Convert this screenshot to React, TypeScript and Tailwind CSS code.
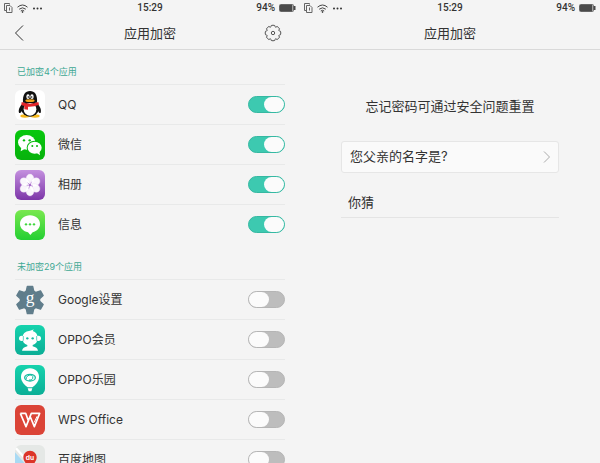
import React, { useState } from 'react';

type AppItem = {
  id: string;
  name: string;
  locked: boolean;
  icon: React.ReactNode;
};

const QQIcon = () => (
  <svg viewBox="0 0 90 90" className="w-full h-full" aria-hidden="true">
    <rect width="90" height="90" rx="18" fill="#fff" />
    <ellipse cx="30" cy="78" rx="14" ry="5" fill="#f5b81c" />
    <ellipse cx="60" cy="78" rx="14" ry="5" fill="#f5b81c" />
    <path d="M22 42C15 48 9 60 12 68c2 3 6-1 9-6M67 42c8 6 13 18 10 26-2 3-6-1-8-6" fill="#111" />
    <ellipse cx="45" cy="56" rx="26" ry="24" fill="#111" />
    <ellipse cx="45" cy="58" rx="19" ry="19" fill="#fff" />
    <path d="M24 38C22 14 31 3 45 3s23 11 21 35z" fill="#111" />
    <ellipse cx="39" cy="20" rx="5" ry="7" fill="#fff" />
    <ellipse cx="51" cy="20" rx="5" ry="7" fill="#fff" />
    <circle cx="40" cy="21" r="2.3" fill="#111" />
    <circle cx="50" cy="21" r="2.3" fill="#111" />
    <ellipse cx="45" cy="32" rx="14" ry="4" fill="#f5a81c" />
    <path d="M20 36q25 11 50 0l2 8q-15 7-33 6v9l-11-1v-10l-9-3z" fill="#e3262b" />
  </svg>
);

const WeChatIcon = () => (
  <svg viewBox="0 0 90 90" className="w-full h-full" aria-hidden="true">
    <defs>
      <linearGradient id="wechat" x2="0" y2="1">
        <stop stopColor="#08c80e" />
        <stop offset="1" stopColor="#08b20d" />
      </linearGradient>
    </defs>
    <rect width="90" height="90" rx="18" fill="url(#wechat)" />
    <path d="M19 52l-2 12 12-7z" fill="#fff" />
    <ellipse cx="35" cy="37" rx="26" ry="22" fill="#fff" />
    <circle cx="27" cy="31" r="3.5" fill="#08bd0e" />
    <circle cx="44" cy="31" r="3.5" fill="#08bd0e" />
    <ellipse cx="59" cy="53" rx="24" ry="21" fill="#08bb0e" />
    <ellipse cx="59" cy="53" rx="21" ry="18" fill="#fff" />
    <path d="M64 68l11 8-2-13z" fill="#fff" />
    <circle cx="52" cy="48" r="3" fill="#08b70d" />
    <circle cx="66" cy="48" r="3" fill="#08b70d" />
  </svg>
);

const GalleryIcon = () => (
  <svg viewBox="0 0 90 90" className="w-full h-full" aria-hidden="true">
    <defs>
      <linearGradient id="gallery" x2="0" y2="1">
        <stop stopColor="#c490df" />
        <stop offset="1" stopColor="#7c35a8" />
      </linearGradient>
    </defs>
    <rect width="90" height="90" rx="18" fill="url(#gallery)" />
    {[0, 60, 120, 180, 240, 300].map((angle) => (
      <ellipse key={angle} cx="45" cy="27" rx="12" ry="15" fill="#fff" fillOpacity="0.94" stroke="#e6d3f1" transform={`rotate(${angle} 45 45)`} />
    ))}
    <path d="M45 45l-7-7M45 45l5-10M45 45l-10 1M45 45l9 4M45 45l-4 11" stroke="#b47cd3" strokeWidth="2" />
    <circle cx="45" cy="45" r="2" fill="#9850bd" />
  </svg>
);

const MessageIcon = () => (
  <svg viewBox="0 0 90 90" className="w-full h-full" aria-hidden="true">
    <defs>
      <linearGradient id="message" x2="0" y2="1">
        <stop stopColor="#79e84f" />
        <stop offset="1" stopColor="#24cf32" />
      </linearGradient>
    </defs>
    <rect width="90" height="90" rx="18" fill="url(#message)" />
    <path d="M45 16c17 0 30 11 30 26 0 12-9 21-22 25l-7 8-7-8C25 64 15 54 15 42c0-15 13-26 30-26z" fill="#fff" />
    <circle cx="33" cy="43" r="3.5" fill="#3fd73c" />
    <circle cx="45" cy="43" r="3.5" fill="#3fd73c" />
    <circle cx="57" cy="43" r="3.5" fill="#3fd73c" />
  </svg>
);

const GoogleIcon = () => (
  <svg viewBox="0 0 90 90" className="w-full h-full" aria-hidden="true">
    <g fill="#607d8b" stroke="#607d8b" strokeWidth="4" strokeLinejoin="round">
      <circle cx="45" cy="45" r="29" />
      {[0, 60, 120, 180, 240, 300].map((angle) => (
        <path key={angle} d="M37 4h16l3 14H34z" transform={`rotate(${angle} 45 45)`} />
      ))}
    </g>
    <text x="45" y="55" textAnchor="middle" fontSize="52" fill="#fff" fontFamily="Liberation Serif, serif">g</text>
  </svg>
);

const MemberIcon = () => (
  <svg viewBox="0 0 90 90" className="w-full h-full" aria-hidden="true">
    <defs>
      <linearGradient id="member" x2="0" y2="1">
        <stop stopColor="#16d3ad" />
        <stop offset="1" stopColor="#0bae96" />
      </linearGradient>
    </defs>
    <rect width="90" height="90" rx="18" fill="url(#member)" />
    <g fill="#fff">
      <circle cx="20" cy="40" r="8" />
      <circle cx="70" cy="40" r="8" />
      <path d="M45 17q8-1 11-4-1 4-3 5 15 5 15 21 0 16-15 21v4q14 3 16 13H21q2-10 16-13v-4Q22 55 22 39q0-19 23-22z" />
    </g>
    <path d="M25 33v14M65 33v14" stroke="#16bca3" strokeWidth="2" />
    <circle cx="37" cy="40" r="3.5" fill="#16bca3" />
    <circle cx="53" cy="40" r="3.5" fill="#16bca3" />
  </svg>
);

const ParkIcon = () => (
  <svg viewBox="0 0 90 90" className="w-full h-full" aria-hidden="true">
    <rect width="90" height="90" rx="18" fill="url(#member)" />
    <path d="M45 10c16 0 27 11 27 26 0 12-9 23-20 31H38C27 59 18 48 18 36c0-15 11-26 27-26z" fill="#fff" />
    <path d="M38 70h14l-3 9h-8z" fill="#fff" />
    <ellipse cx="45" cy="38" rx="16" ry="10" fill="none" stroke="#15bda1" strokeWidth="4" />
    <path d="M33 44q1-15 16-14 7 4 4 11-4 6-11 4" fill="none" stroke="#15bda1" strokeWidth="3" />
  </svg>
);

const WpsIcon = () => (
  <svg viewBox="0 0 90 90" className="w-full h-full" aria-hidden="true">
    <rect width="90" height="90" rx="18" fill="#db4437" />
    <g fill="none" stroke="#fff" strokeWidth="5" strokeLinejoin="round">
      <path d="M16 25h16l8 22M16 25l17 40 16-40h25L58 65 46 36" />
      <path d="M58 52l8-18" strokeWidth="3" />
    </g>
  </svg>
);

const MapIcon = () => (
  <svg viewBox="0 0 90 90" className="w-full h-full" aria-hidden="true">
    <rect width="90" height="90" rx="18" fill="#e5e8e6" />
    <path d="M0 22L60 90H18Q0 90 0 72z" fill="#a9daf4" />
    <path d="M3 10L75 90" stroke="#fff" strokeWidth="7" />
    <path d="M45 17c-12 0-20 9-20 20 0 13 12 22 20 36 8-14 20-23 20-36 0-11-8-20-20-20z" fill="#dc3529" />
    <text x="45" y="44" textAnchor="middle" fontSize="20" fontWeight="700" fill="#fff" fontFamily="Inter, sans-serif">du</text>
  </svg>
);

// scalloped gear outline, eight rounded teeth
const point = (radius: number, deg: number) => {
  const rad = (deg * Math.PI) / 180;
  return `${(9 + radius * Math.cos(rad)).toFixed(2)} ${(9 + radius * Math.sin(rad)).toFixed(2)}`;
};
const gearPath = [0, 45, 90, 135, 180, 225, 270, 315]
  .map((a, i) => `${i === 0 ? 'M' : 'L'}${point(7.7, a - 13)}Q${point(8.1, a)} ${point(7.7, a + 13)}L${point(6.6, a + 18)}Q${point(6.2, a + 22.5)} ${point(6.6, a + 27)}`)
  .join('') + 'Z';

const initialApps: AppItem[] = [
  { id: 'qq', name: 'QQ', locked: true, icon: <QQIcon /> },
  { id: 'wechat', name: '微信', locked: true, icon: <WeChatIcon /> },
  { id: 'gallery', name: '相册', locked: true, icon: <GalleryIcon /> },
  { id: 'message', name: '信息', locked: true, icon: <MessageIcon /> },
];

const otherApps: AppItem[] = [
  { id: 'google', name: 'Google设置', locked: false, icon: <GoogleIcon /> },
  { id: 'member', name: 'OPPO会员', locked: false, icon: <MemberIcon /> },
  { id: 'park', name: 'OPPO乐园', locked: false, icon: <ParkIcon /> },
  { id: 'wps', name: 'WPS Office', locked: false, icon: <WpsIcon /> },
  { id: 'map', name: '百度地图', locked: false, icon: <MapIcon /> },
];

function StatusBar() {
  return (
    <div className="grid grid-cols-3 items-center h-4 px-1 font-[Roboto,sans-serif] text-[10px] font-medium leading-4 text-[#333]">
      <div className="flex items-center gap-1">
        <svg width="9" height="10" viewBox="0 0 9 10" fill="none" stroke="#666" aria-hidden="true">
          <path d="M2.5 7.5h-2v-7h5v1M2.5 2.5h3.5l2 2v5H2.5zM5.5 4.5v3" />
        </svg>
        <svg width="11" height="9" viewBox="0 0 11 9" fill="none" stroke="#444" aria-hidden="true">
          <path d="M.5 3.2q5-4.4 10 0M2.2 5.2q3.3-2.8 6.6 0M3.8 7q1.7-1.4 3.4 0" />
          <circle cx="5.5" cy="8" r=".5" fill="#333" />
        </svg>
        <svg width="11" height="3" viewBox="0 0 11 3" fill="#333" aria-hidden="true">
          <circle cx="2" cy="1.5" r="1" />
          <circle cx="5.5" cy="1.5" r="1" />
          <circle cx="9" cy="1.5" r="1" />
        </svg>
      </div>
      <span className="text-center">15:29</span>
      <div className="flex items-center justify-end gap-1">
        <span>94%</span>
        <svg width="17" height="8" viewBox="0 0 17 8" aria-hidden="true">
          <rect x=".5" y=".5" width="14" height="7" rx="1" fill="#fff" stroke="#666" />
          <rect x="1" y="1" width="12.5" height="6" fill="#4a4a4a" />
          <rect x="15" y="2" width="1.5" height="4" fill="#4a4a4a" />
        </svg>
      </div>
    </div>
  );
}

function Header({ withActions }: { withActions?: boolean }) {
  return (
    <header className="flex items-center justify-between h-[34px] px-3 border-b border-[#d9d9d9]">
      <div className="w-6">
        {withActions && (
          <button aria-label="返回" className="block">
            <svg width="14" height="16" viewBox="0 0 14 16" fill="none" stroke="#333" aria-hidden="true">
              <path d="M11 .5L3.5 8l7.5 7.5" />
            </svg>
          </button>
        )}
      </div>
      <h1 className="text-[13px] leading-5 text-[#333]">应用加密</h1>
      <div className="w-6">
        {withActions && (
          <button aria-label="设置" className="block">
            <svg width="18" height="18" viewBox="0 0 18 18" fill="none" stroke="#555" aria-hidden="true">
              <path d={gearPath} strokeLinejoin="round" />
              <circle cx="9" cy="9" r="1.7" />
            </svg>
          </button>
        )}
      </div>
    </header>
  );
}

type AppSectionProps = {
  title: string;
  apps: AppItem[];
  onToggle: (id: string) => void;
};

function AppSection({ title, apps, onToggle }: AppSectionProps) {
  return (
    <section className="px-[15px]">
      <h2 className="pt-3 pb-1 pl-[2px] text-[9px] leading-4 text-[#3fa893]">{title}</h2>
      <ul>
        {apps.map((app) => (
          <li key={app.id} className="border-t border-[#e8e9e9]">
            <label htmlFor={app.id} className="flex items-center h-[39px]">
              <span className="w-[30px] h-[30px] shrink-0">{app.icon}</span>
              <span className="flex-1 pl-[13px] text-xs text-[#333]">{app.name}</span>
              <input
                id={app.id}
                type="checkbox"
                role="switch"
                checked={app.locked}
                onChange={() => onToggle(app.id)}
                className="appearance-none flex w-[37px] h-[17px] shrink-0 rounded-full border border-[#b5b5b5] bg-[#bdbdbd] before:block before:w-5 before:h-[15px] before:rounded-full before:bg-[#fbfbfb] before:content-[''] checked:justify-end checked:border-[#35b8a2] checked:bg-[#3dc9b0]"
              />
            </label>
          </li>
        ))}
      </ul>
    </section>
  );
}

function App() {
  const [locked, setLocked] = useState<AppItem[]>(initialApps);
  const [unlocked, setUnlocked] = useState<AppItem[]>(otherApps);
  const [answer, setAnswer] = useState('你猜');

  const toggle = (id: string) => {
    const flip = (list: AppItem[]) => list.map((app) => (app.id === id ? { ...app, locked: !app.locked } : app));
    setLocked(flip);
    setUnlocked(flip);
  };

  return (
    <div className="grid grid-cols-2 h-screen overflow-hidden bg-[#f4f4f4] font-[Inter,'Noto_Sans_CJK_SC',sans-serif]">
      <main className="flex flex-col min-h-0">
        <StatusBar />
        <Header withActions />
        <div className="flex flex-col gap-[3px] flex-1 min-h-0 overflow-hidden pt-[2px]">
          <AppSection title="已加密4个应用" apps={locked} onToggle={toggle} />
          <AppSection title="未加密29个应用" apps={unlocked} onToggle={toggle} />
        </div>
      </main>

      <aside>
        <StatusBar />
        <Header />
        <form className="px-[41px] pt-[46px]" onSubmit={(e) => e.preventDefault()}>
          <p className="text-center text-[13px] leading-5 text-[#333]">忘记密码可通过安全问题重置</p>
          <div className="relative mt-[25px]">
            <select
              aria-label="安全问题"
              className="block w-full h-8 appearance-none rounded-[3px] border border-[#e6e6e6] bg-[#fafafa] px-2 text-[13px] text-[#333]"
            >
              <option>您父亲的名字是?</option>
            </select>
            <svg width="8" height="12" viewBox="0 0 8 12" fill="none" stroke="#aaa" className="absolute right-2 top-[10px] pointer-events-none" aria-hidden="true">
              <path d="M1 .5L6.5 6 1 11.5" />
            </svg>
          </div>
          <input
            type="text"
            aria-label="答案"
            value={answer}
            onChange={(e) => setAnswer(e.target.value)}
            className="block w-full h-8 mt-[13px] px-[7px] border-b border-[#e4e4e4] text-[13px] text-[#333]"
          />
        </form>
      </aside>
    </div>
  );
}

export default App;
